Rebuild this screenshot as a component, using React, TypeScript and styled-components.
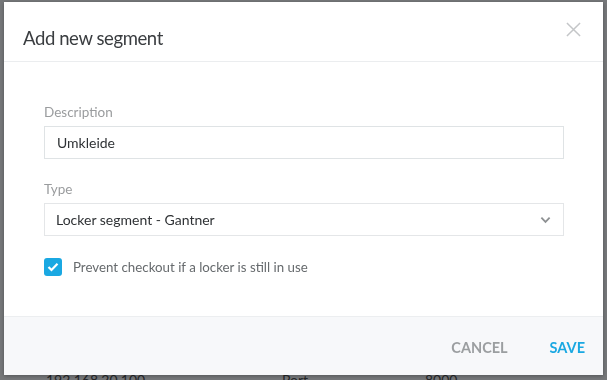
import React, { useState } from "react";
import styled, { createGlobalStyle } from "styled-components";

const GlobalStyle = createGlobalStyle`
  html, body {
    margin: 0;
    padding: 0;
    width: 607px;
    height: 380px;
    overflow: hidden;
    font-family: "Lato", "Open Sans", sans-serif;
    background: #ffffff;
  }
`;

export default function App() {
  const [checked, setChecked] = useState(true);
  const [description, setDescription] = useState("Umkleide");

  return (
    <>
      <GlobalStyle />
      <Page>
        <PageRow>
          <Cell width={236}>192.168.20.100</Cell>
          <Cell width={143}>Port</Cell>
          <Cell width={100}>8000</Cell>
        </PageRow>
      </Page>

      <Backdrop>
        <Modal>
          <ModalHeader>
            <ModalTitle>Add new segment</ModalTitle>
            <CloseButton aria-label="Close">
              <svg width="15" height="15" viewBox="0 0 16 16">
                <path d="M1 1 L15 15 M15 1 L1 15" stroke="#c4c6c8" strokeWidth="1.6" fill="none" />
              </svg>
            </CloseButton>
          </ModalHeader>

          <ModalBody>
            <Field>
              <Label>Description</Label>
              <Input value={description} onChange={(e) => setDescription(e.target.value)} />
            </Field>

            <Field>
              <Label>Type</Label>
              <SelectBox>
                <span>Locker segment - Gantner</span>
                <svg width="11" height="8" viewBox="0 0 12 8">
                  <path d="M1.5 1.5 L6 6 L10.5 1.5" stroke="#8e9193" strokeWidth="2" fill="none" />
                </svg>
              </SelectBox>
            </Field>

            <CheckRow onClick={() => setChecked(!checked)}>
              <CheckBox checked={checked}>
                {checked && (
                  <svg width="12" height="10" viewBox="0 0 12 10">
                    <path d="M1.5 5 L4.5 8 L10.5 1.8" stroke="#fff" strokeWidth="2.2" fill="none" />
                  </svg>
                )}
              </CheckBox>
              <CheckLabel>Prevent checkout if a locker is still in use</CheckLabel>
            </CheckRow>
          </ModalBody>

          <ModalFooter>
            <FooterButton>CANCEL</FooterButton>
            <FooterButton primary>SAVE</FooterButton>
          </ModalFooter>
        </Modal>
      </Backdrop>
    </>
  );
}

const Page = styled.div`
  width: 607px;
  height: 380px;
  background: #fafafa;
  color: #333;
  font-size: 14px;
  display: flex;
  flex-direction: column;
  justify-content: flex-end;
`;

const PageRow = styled.div`
  display: flex;
  padding-left: 46px;
  margin-bottom: -8px;
`;

const Cell = styled.span<{ width: number }>`
  width: ${(p) => p.width}px;
`;

const Backdrop = styled.div`
  position: fixed;
  inset: 0;
  background: rgba(30, 34, 36, 0.6);
  padding: 2px 4px 0 4px;
`;

const Modal = styled.div`
  width: 599px;
  height: 373px;
  background: #fff;
  display: flex;
  flex-direction: column;
  box-shadow: 0 1px 4px rgba(0, 0, 0, 0.3);
`;

const ModalHeader = styled.div`
  height: 59px;
  border-bottom: 1px solid #ebedef;
  display: flex;
  align-items: center;
  justify-content: space-between;
  padding: 0 22px 0 19px;
  flex-shrink: 0;
`;

const ModalTitle = styled.h2`
  margin: 0;
  padding-top: 12px;
  font-size: 18.5px;
  letter-spacing: -0.4px;
  font-weight: 400;
  color: #3a3d40;
`;

const CloseButton = styled.button`
  border: none;
  background: none;
  padding: 0;
  margin-top: -4px;
  display: flex;
  cursor: pointer;
`;

const ModalBody = styled.div`
  flex: 1;
  display: flex;
  flex-direction: column;
  padding: 42px 39px 0 40px;
  gap: 22px;
`;

const Field = styled.div`
  display: flex;
  flex-direction: column;
  gap: 6px;
`;

const Label = styled.label`
  font-size: 13.5px;
  color: #9a9c9e;
`;

const Input = styled.input`
  height: 33px;
  box-sizing: border-box;
  border: 1px solid #dfe3e5;
  padding: 0 12px;
  font-family: inherit;
  font-size: 14px;
  color: #2f3235;
  outline: none;
`;

const SelectBox = styled.div`
  height: 33px;
  box-sizing: border-box;
  border: 1px solid #e4e6e8;
  padding: 0 12px 0 11px;
  display: flex;
  align-items: center;
  justify-content: space-between;
  font-size: 14px;
  color: #2f3235;
`;

const CheckRow = styled.div`
  display: flex;
  align-items: center;
  gap: 11px;
  margin-top: 0;
  cursor: pointer;
`;

const CheckBox = styled.span<{ checked: boolean }>`
  width: 18px;
  height: 18px;
  border-radius: 3px;
  box-sizing: border-box;
  display: flex;
  align-items: center;
  justify-content: center;
  background: ${(p) => (p.checked ? "#1aa8e2" : "#fff")};
  border: ${(p) => (p.checked ? "none" : "1px solid #cfd3d6")};
`;

const CheckLabel = styled.span`
  font-size: 13.3px;
  color: #666a6d;
`;

const ModalFooter = styled.div`
  height: 59px;
  box-sizing: border-box;
  border-top: 1px solid #eceef0;
  background: #f7f8fa;
  display: flex;
  align-items: center;
  justify-content: flex-end;
  gap: 42px;
  padding: 3px 18px 0 0;
  flex-shrink: 0;
`;

const FooterButton = styled.button<{ primary?: boolean }>`
  border: none;
  background: none;
  padding: 0;
  font-family: inherit;
  font-size: 14.5px;
  font-weight: 700;
  color: ${(p) => (p.primary ? "#1aa8e2" : "#9b9ea0")};
  cursor: pointer;
`;
